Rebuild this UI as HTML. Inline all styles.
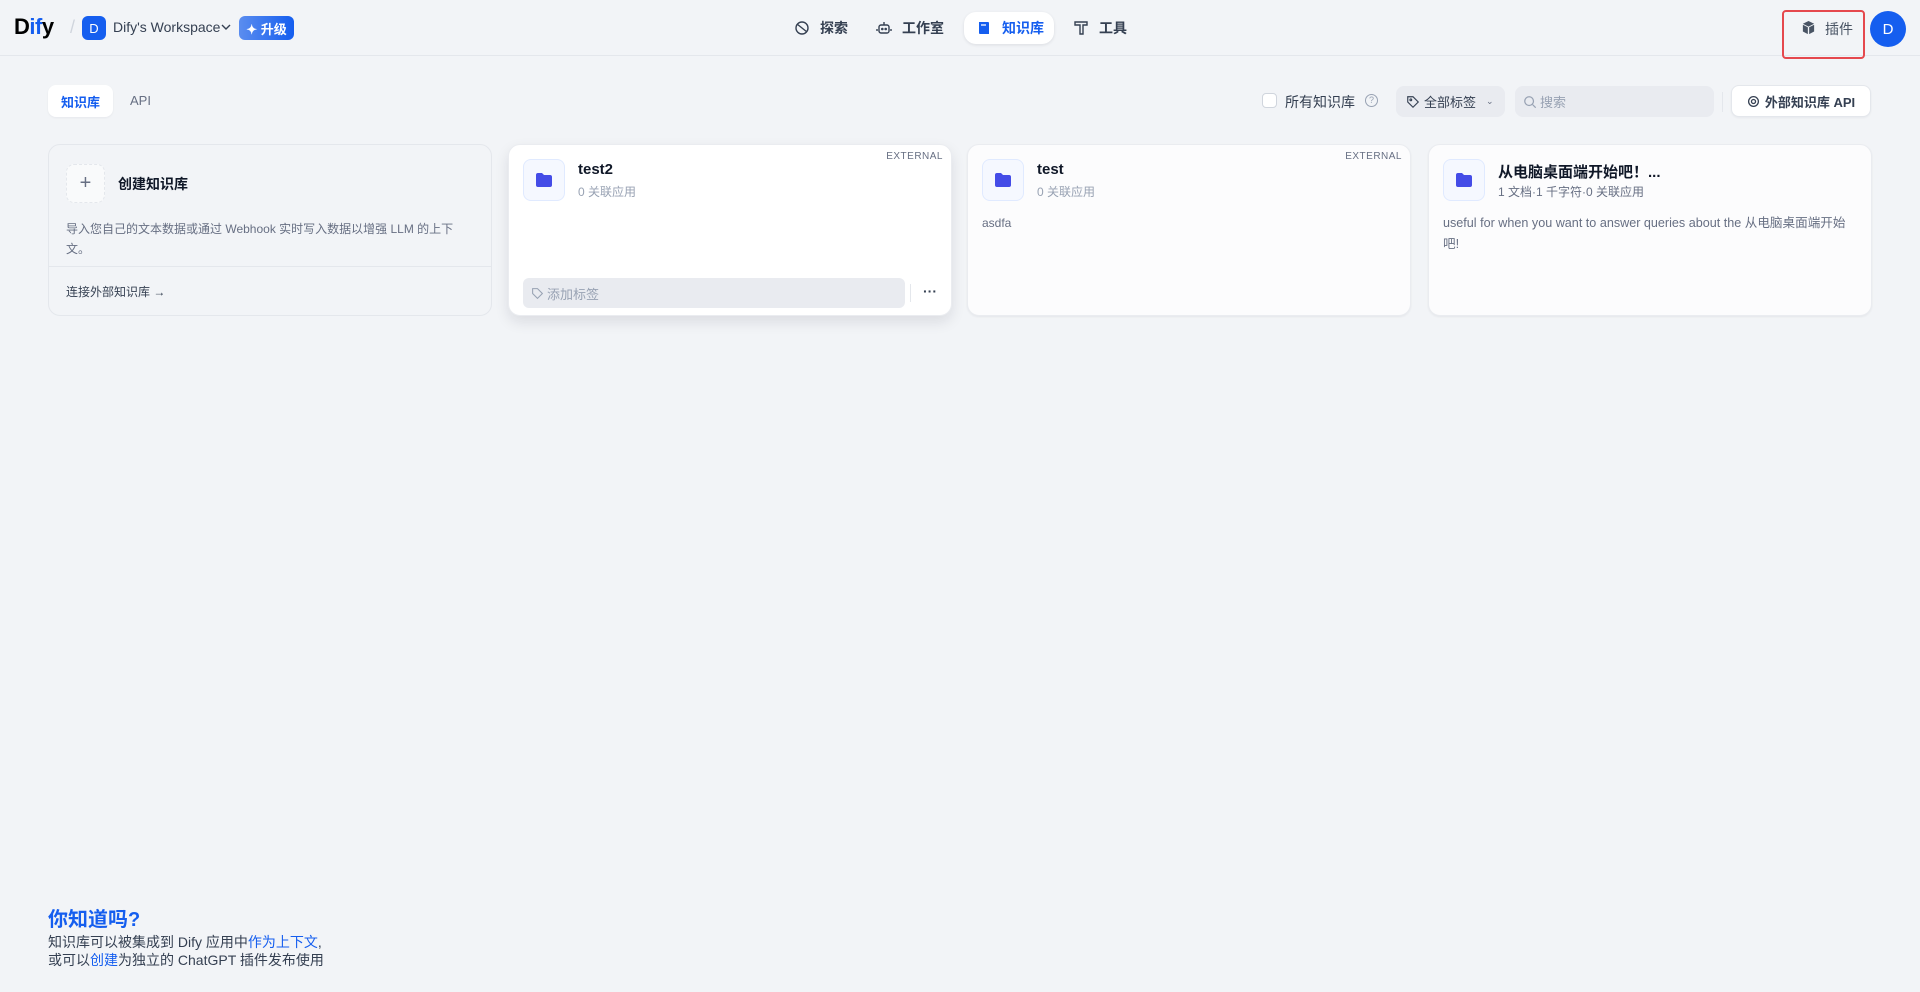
<!DOCTYPE html>
<html><head><meta charset="utf-8"><style>
*{box-sizing:border-box;margin:0;padding:0}
body{width:1920px;height:992px;background:#f2f4f7;font-family:"Liberation Sans","Noto Sans CJK SC",sans-serif;color:#354052;position:relative;overflow:hidden}
.a{position:absolute}
.hdr{left:0;top:0;width:1920px;height:56px;border-bottom:1px solid #e4e7ec}
.nav{font-size:14px;font-weight:600;color:#354052;display:flex;align-items:center;gap:8px;height:32px}
.card{position:absolute;top:144px;width:444px;height:172px;border-radius:12px;background:#fcfcfd;box-shadow:0 1px 2px rgba(16,24,40,.06);border:1px solid #eaecf0}
.icon{position:absolute;left:14px;top:14px;width:42px;height:42px;border:1px solid #e0eaff;border-radius:8px;background:#f5f8ff;display:flex;align-items:center;justify-content:center}
.title{position:absolute;left:69px;top:16px;font-size:15px;font-weight:600;color:#101828}
.sub{position:absolute;left:69px;top:38px;font-size:12px;color:#98a2b3}
.ext{position:absolute;right:8px;top:6px;font-size:10px;color:#676f83;letter-spacing:.5px;font-weight:500}
.desc{position:absolute;left:14px;right:14px;top:68px;font-size:12px;line-height:20px;color:#676f83}
</style></head><body>
<div class="a hdr"></div>
<div class="a" style="left:14px;top:14px;font-size:22px;font-weight:700;color:#000;letter-spacing:-0.5px">D<span style="color:#155eef">if</span>y</div>
<div class="a" style="left:70px;top:17px;font-size:18px;color:#d0d5dd">/</div>
<div class="a" style="left:82px;top:16px;width:24px;height:24px;border-radius:6px;background:#155eef;color:#fff;font-size:13px;display:flex;align-items:center;justify-content:center">D</div>
<div class="a" style="left:113px;top:19px;font-size:14px;color:#354052;font-weight:500">Dify's Workspace</div>
<svg class="a" style="left:221px;top:23px" width="10" height="8" viewBox="0 0 10 8"><path d="M1 2l4 4 4-4" stroke="#354052" stroke-width="1.4" fill="none"/></svg>
<div class="a" style="left:239px;top:16px;width:55px;height:24px;border-radius:6px;background:linear-gradient(90deg,#5b8def,#155eef);color:#fff;font-size:13px;font-weight:600;display:flex;align-items:center;justify-content:center;gap:4px">✦ 升级</div>

<div class="a nav" style="left:794px;top:12px"><svg width="16" height="16" viewBox="0 0 16 16" fill="none" stroke="#354052" stroke-width="1.4"><circle cx="8" cy="8" r="6"/><path d="M3 4l10 8"/></svg><span style="margin-left:2px">探索</span></div>
<div class="a nav" style="left:876px;top:12px"><svg width="16" height="16" viewBox="0 0 16 16" fill="none" stroke="#354052" stroke-width="1.4"><rect x="3" y="5" width="10" height="8" rx="2"/><path d="M8 5V2M1 9v2M15 9v2"/><circle cx="6.3" cy="9" r=".6"/><circle cx="9.7" cy="9" r=".6"/></svg><span style="margin-left:2px">工作室</span></div>
<div class="a" style="left:964px;top:12px;width:90px;height:32px;border-radius:12px;background:#fff;box-shadow:0 1px 3px rgba(16,24,40,.1)"></div>
<div class="a nav" style="left:976px;top:12px;color:#155eef"><svg width="16" height="16" viewBox="0 0 16 16"><path d="M3 2h9a1 1 0 011 1v11H4a1 1 0 01-1-1z" fill="#155eef"/><path d="M5 5h5" stroke="#fff" stroke-width="1.3"/></svg><span style="margin-left:2px">知识库</span></div>
<div class="a nav" style="left:1073px;top:12px"><svg width="16" height="16" viewBox="0 0 16 16" fill="none" stroke="#354052" stroke-width="1.4"><path d="M2 2h12v3H10v9H7V5H2z"/></svg><span style="margin-left:2px">工具</span></div>

<div class="a" style="left:1782px;top:10px;width:83px;height:49px;border:2px solid #e5484d;border-radius:4px"></div>
<svg class="a" style="left:1801px;top:20px" width="15" height="15" viewBox="0 0 16 16"><path d="M8 1l6 3-6 3-6-3z M2 5l5.3 2.7V15L2 12.3z M14 5l-5.3 2.7V15L14 12.3z" fill="#495464"/></svg>
<div class="a" style="left:1825px;top:19px;font-size:14px;color:#495464">插件</div>
<div class="a" style="left:1870px;top:11px;width:36px;height:36px;border-radius:50%;background:#155eef;color:#fff;font-size:15px;display:flex;align-items:center;justify-content:center">D</div>

<div class="a" style="left:48px;top:85px;width:65px;height:32px;border-radius:8px;background:#fff;box-shadow:0 1px 2px rgba(16,24,40,.05);color:#155eef;font-size:13px;font-weight:600;display:flex;align-items:center;justify-content:center">知识库</div>
<div class="a" style="left:130px;top:93px;font-size:13px;color:#676f83;font-weight:500">API</div>

<div class="a" style="left:1262px;top:93px;width:15px;height:15px;border:1px solid #d0d5dd;border-radius:4px;background:#fff"></div>
<div class="a" style="left:1285px;top:92px;font-size:14px;color:#354052">所有知识库</div>
<div class="a" style="left:1365px;top:94px;width:13px;height:13px;border:1px solid #98a2b3;border-radius:50%;font-size:9px;color:#98a2b3;text-align:center;line-height:11px">?</div>
<div class="a" style="left:1396px;top:86px;width:109px;height:31px;border-radius:8px;background:#e9ebf0;font-size:13px;color:#354052;display:flex;align-items:center;padding-left:10px;gap:4px"><svg width="14" height="14" viewBox="0 0 16 16" fill="none" stroke="#354052" stroke-width="1.3"><path d="M2 2h6l6 6-6 6-6-6z"/><circle cx="5.5" cy="5.5" r="1"/></svg>全部标签 <span style="font-size:9px;margin-left:6px;color:#676f83">⌄</span></div>
<div class="a" style="left:1515px;top:86px;width:199px;height:31px;border-radius:8px;background:#e9ebf0;font-size:13px;color:#98a2b3;display:flex;align-items:center;padding-left:8px;gap:3px"><svg width="14" height="14" viewBox="0 0 16 16" fill="none" stroke="#98a2b3" stroke-width="1.4"><circle cx="7" cy="7" r="5"/><path d="M11 11l3.5 3.5"/></svg>搜索</div>
<div class="a" style="left:1722px;top:92px;width:1px;height:20px;background:#e4e7ec"></div>
<div class="a" style="left:1731px;top:85px;width:140px;height:32px;border-radius:8px;background:#fff;border:1px solid #e4e7ec;box-shadow:0 1px 2px rgba(16,24,40,.05);font-size:13px;font-weight:600;color:#354052;display:flex;align-items:center;justify-content:center;gap:5px"><svg width="13" height="13" viewBox="0 0 16 16" fill="none" stroke="#354052" stroke-width="1.6"><circle cx="8" cy="8" r="6"/><circle cx="8" cy="8" r="2.5"/></svg>外部知识库 API</div>

<div class="card" style="left:48px;background:#f2f4f7;box-shadow:none;border:1px solid #e4e7ec">
 <div class="a" style="left:17px;top:19px;width:39px;height:39px;border:1px dashed #e4e7ec;border-radius:8px;background:#f9fafb;font-size:20px;color:#676f83;text-align:center;line-height:36px">+</div>
 <div class="a" style="left:69px;top:29px;font-size:14px;font-weight:600;color:#101828">创建知识库</div>
 <div class="a" style="left:17px;top:74px;width:400px;font-size:12px;line-height:20px;color:#676f83">导入您自己的文本数据或通过 Webhook 实时写入数据以增强 LLM 的上下文。</div>
 <div class="a" style="left:0;right:0;top:121px;height:1px;background:#e4e7ec"></div>
 <div class="a" style="left:17px;top:138px;font-size:12px;color:#354052">连接外部知识库 →</div>
</div>

<div class="card" style="left:508px;background:#fff;box-shadow:0 6px 14px rgba(16,24,40,.1)">
 <div class="icon"><svg width="18" height="16" viewBox="0 0 18 16"><path d="M1 3a2 2 0 012-2h4l2 2h6a2 2 0 012 2v8a2 2 0 01-2 2H3a2 2 0 01-2-2z" fill="#444ce7"/></svg></div>
 <div class="title">test2</div><div class="sub">0 关联应用</div><div class="ext">EXTERNAL</div>
 <div class="a" style="left:14px;top:133px;width:382px;height:30px;border-radius:6px;background:#e9ebf0;font-size:13px;color:#98a2b3;display:flex;align-items:center;padding-left:8px;gap:3px"><svg width="13" height="13" viewBox="0 0 16 16" fill="none" stroke="#98a2b3" stroke-width="1.3"><path d="M2 2h6l6 6-6 6-6-6z"/></svg>添加标签</div>
 <div class="a" style="left:401px;top:139px;width:1px;height:18px;background:#e4e7ec"></div>
 <div class="a" style="left:414px;top:138px;font-size:14px;font-weight:700;color:#354052">···</div>
</div>

<div class="card" style="left:967px">
 <div class="icon"><svg width="18" height="16" viewBox="0 0 18 16"><path d="M1 3a2 2 0 012-2h4l2 2h6a2 2 0 012 2v8a2 2 0 01-2 2H3a2 2 0 01-2-2z" fill="#444ce7"/></svg></div>
 <div class="title">test</div><div class="sub">0 关联应用</div><div class="ext">EXTERNAL</div>
 <div class="desc">asdfa</div>
</div>

<div class="card" style="left:1428px">
 <div class="icon"><svg width="18" height="16" viewBox="0 0 18 16"><path d="M1 3a2 2 0 012-2h4l2 2h6a2 2 0 012 2v8a2 2 0 01-2 2H3a2 2 0 01-2-2z" fill="#444ce7"/></svg></div>
 <div class="title">从电脑桌面端开始吧！...</div><div class="sub" style="color:#676f83">1 文档·1 千字符·0 关联应用</div>
 <div class="desc" style="font-size:12.6px;line-height:21px;right:18px">useful for when you want to answer queries about the 从电脑桌面端开始吧!</div>
</div>

<div class="a" style="left:48px;top:903px;font-size:20px;font-weight:700;color:#155eef">你知道吗?</div>
<div class="a" style="left:48px;top:933px;font-size:14px;line-height:18px;color:#354052">知识库可以被集成到 Dify 应用中<span style="color:#155eef">作为上下文</span>,<br>或可以<span style="color:#155eef">创建</span>为独立的 ChatGPT 插件发布使用</div>
</body></html>
